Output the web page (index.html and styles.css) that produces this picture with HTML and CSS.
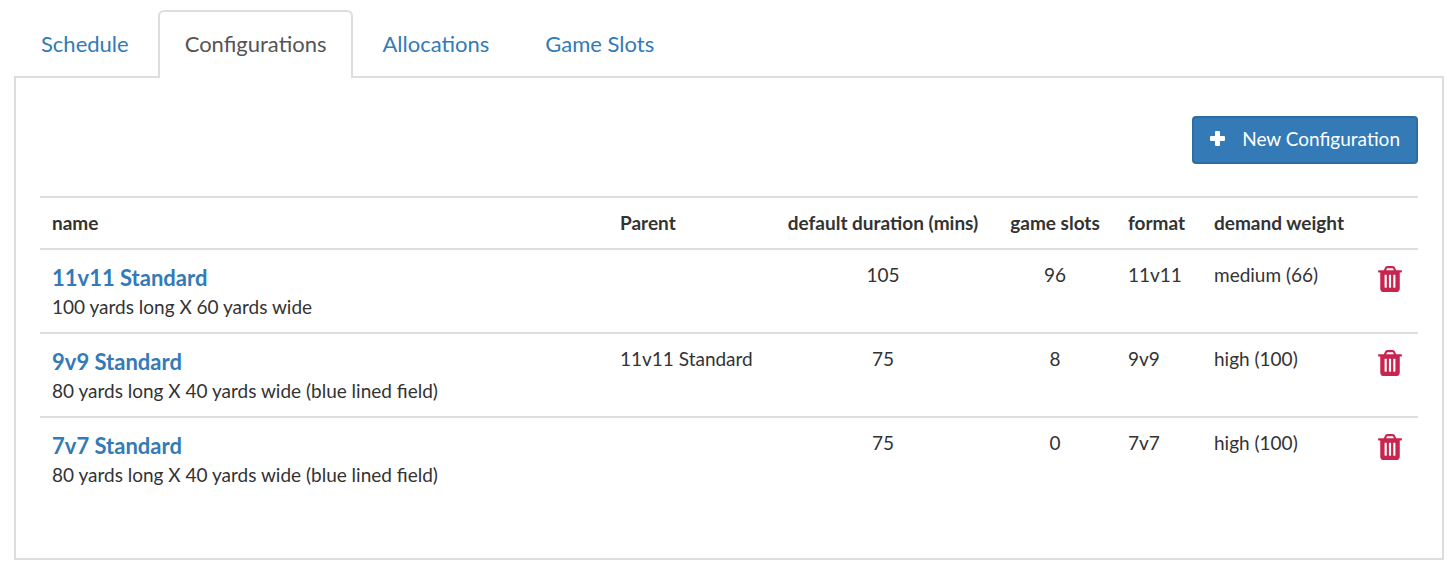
FILE: index.html
```
<!DOCTYPE html>
<html lang="en">
<head>
    <meta charset="utf-8">
    <title>Configurations</title>
    <meta name="viewport" content="width=device-width, initial-scale=1.0">
    <link rel="stylesheet" href="styles.css">
</head>
<body>
<svg class="sprite" width="0" height="0">
    <symbol id="icon_trash" viewBox="0 0 1408 1536">
        <path d="M512 1248V544q0-14-9-23t-23-9h-64q-14 0-23 9t-9 23v704q0 14 9 23t23 9h64q14 0 23-9t9-23zm256 0V544q0-14-9-23t-23-9h-64q-14 0-23 9t-9 23v704q0 14 9 23t23 9h64q14 0 23-9t9-23zm256 0V544q0-14-9-23t-23-9h-64q-14 0-23 9t-9 23v704q0 14 9 23t23 9h64q14 0 23-9t9-23zM480 256h448l-48-117q-7-9-17-11H546q-10 2-17 11zm928 32v64q0 14-9 23t-23 9h-96v948q0 83-47 143.500t-113 60.500H288q-66 0-113-58.500T128 1336V384H32q-14 0-23-9t-9-23v-64q0-14 9-23t23-9h309l70-167q15-37 54-63t79-26h320q40 0 79 26t54 63l70 167h309q14 0 23 9t9 23z"/>
    </symbol>
</svg>
<ul class="tabs">
    <li><a href="#schedule">Schedule</a></li>
    <li><a href="#configurations" class="is_active">Configurations</a></li>
    <li><a href="#allocations">Allocations</a></li>
    <li><a href="#game_slots">Game Slots</a></li>
</ul>
<div class="tab_content">
    <div class="toolbar">
        <button type="button" class="btn_new">
            <svg class="plus" viewBox="0 0 16 16"><path d="M6 0h3q1 0 1 1v4h4q1 0 1 1v3q0 1-1 1h-4v4q0 1-1 1H6q-1 0-1-1v-4H1q-1 0-1-1V6q0-1 1-1h4V1q0-1 1-1z"/></svg>
            New Configuration
        </button>
    </div>
    <table class="config_table">
        <thead>
            <tr>
                <th class="name">name</th>
                <th class="parent">Parent</th>
                <th class="duration">default duration (mins)</th>
                <th class="slots">game slots</th>
                <th class="format">format</th>
                <th class="weight">demand weight</th>
                <td class="action"></td>
            </tr>
        </thead>
        <tbody>
            <tr>
                <td><a href="#config_11v11" class="title">11v11 Standard</a><div>100 yards long X 60 yards wide</div></td>
                <td></td>
                <td class="duration">105</td>
                <td class="slots">96</td>
                <td>11v11</td>
                <td>medium (66)</td>
                <td class="action"><button type="button" class="btn_delete" aria-label="Delete 11v11 Standard"><svg><use href="#icon_trash"/></svg></button></td>
            </tr>
            <tr>
                <td><a href="#config_9v9" class="title">9v9 Standard</a><div>80 yards long X 40 yards wide (blue lined field)</div></td>
                <td>11v11 Standard</td>
                <td class="duration">75</td>
                <td class="slots">8</td>
                <td>9v9</td>
                <td>high (100)</td>
                <td class="action"><button type="button" class="btn_delete" aria-label="Delete 9v9 Standard"><svg><use href="#icon_trash"/></svg></button></td>
            </tr>
            <tr>
                <td><a href="#config_7v7" class="title">7v7 Standard</a><div>80 yards long X 40 yards wide (blue lined field)</div></td>
                <td></td>
                <td class="duration">75</td>
                <td class="slots">0</td>
                <td>7v7</td>
                <td>high (100)</td>
                <td class="action"><button type="button" class="btn_delete" aria-label="Delete 7v7 Standard"><svg><use href="#icon_trash"/></svg></button></td>
            </tr>
        </tbody>
    </table>
</div>
</body>
</html>
```
FILE: styles.css
```
* {
    box-sizing: border-box;
}

body {
    margin: 10px 12px 10px 14px;
    background-color: #fff;
    color: #333;
    font-family: Lato, "Liberation Sans", sans-serif;
    font-size: 19px;
    line-height: 26px;
}

a {
    color: #337ab7;
    text-decoration: none;
}

.sprite {
    position: absolute;
}

.tabs {
    display: flex;
    gap: 2px;
    margin: 0;
    padding: 0;
    list-style: none;
}

.tabs a {
    display: block;
    height: 66px;
    padding: 0 25px;
    border: 2px solid transparent;
    border-bottom: 0;
    font-size: 22px;
    line-height: 64px;
}

.tabs a.is_active {
    height: 68px;
    margin-bottom: -2px;
    border-color: #ddd;
    border-radius: 6px 6px 0 0;
    background-color: #fff;
    color: #555;
    position: relative;
}

.tab_content {
    padding: 38px 24px 58px;
    border: 2px solid #ddd;
}

.toolbar {
    display: flex;
    justify-content: flex-end;
    margin-bottom: 32px;
}

.btn_new {
    display: flex;
    align-items: center;
    gap: 16px;
    height: 48px;
    padding: 0 16px 2px;
    border: 2px solid #2e6da4;
    border-radius: 4px;
    background-color: #337ab7;
    color: #fff;
    font: inherit;
    cursor: pointer;
}

.btn_new .plus {
    width: 16px;
    height: 16px;
    fill: #fff;
}

.config_table {
    width: 100%;
    border-collapse: collapse;
    table-layout: fixed;
}

.config_table tr {
    border-top: 2px solid #ddd;
}

.config_table th,
.config_table td {
    padding: 12px;
    text-align: left;
    vertical-align: top;
}

.config_table thead th {
    white-space: nowrap;
}

.config_table thead .parent {
    width: 164px;
}

.config_table thead .duration {
    width: 222px;
}

.config_table thead .slots {
    width: 122px;
}

.config_table thead .format {
    width: 86px;
}

.config_table thead .weight {
    width: 156px;
}

.config_table thead .action {
    width: 60px;
}

.config_table .duration,
.config_table .slots {
    text-align: center;
}

.config_table .title {
    display: inline-block;
    font-size: 22px;
    font-weight: bold;
    line-height: 32px;
    vertical-align: top;
}

.config_table td.action {
    text-align: right;
}

.btn_delete {
    padding: 4px;
    border: 0;
    background: none;
    color: #c7254e;
    cursor: pointer;
    vertical-align: top;
}

.btn_delete svg {
    display: block;
    width: 24px;
    height: 26px;
    fill: currentColor;
}
```
